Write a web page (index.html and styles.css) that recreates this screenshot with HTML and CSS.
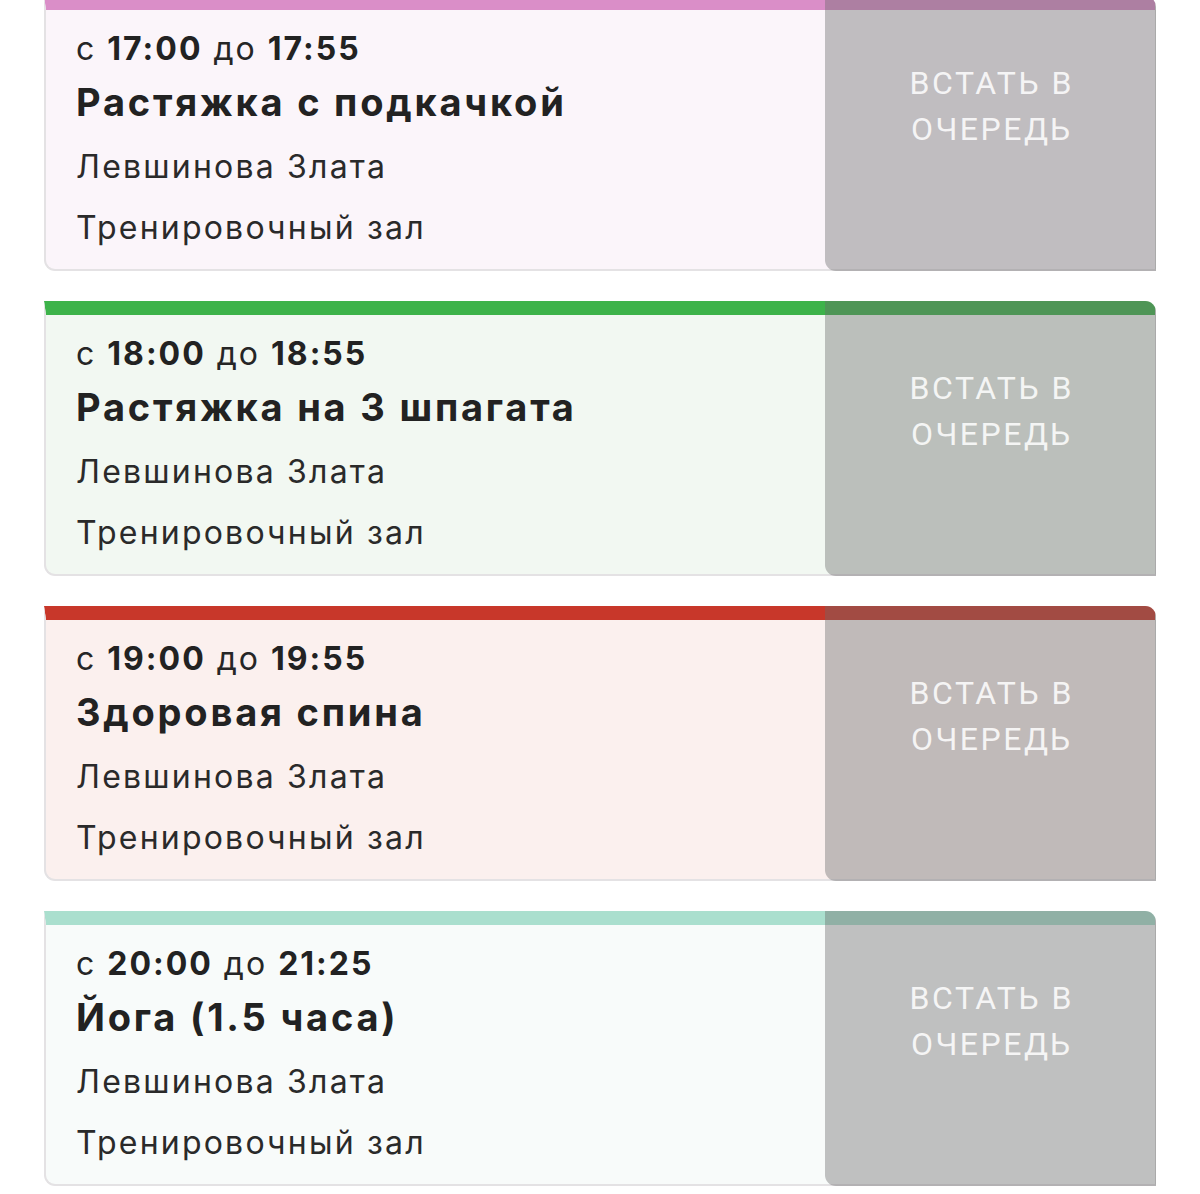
FILE: index.html
```html
<!DOCTYPE html>
<html lang="ru">
<head>
<meta charset="utf-8">
<title>Расписание</title>
<link rel="stylesheet" href="styles.css">
</head>
<body>
<div class="list">
  <div class="card pink">
    <div class="info">
      <div class="time">с <b>17:00</b> до <b>17:55</b></div>
      <div class="title">Растяжка с подкачкой</div>
      <div class="line">Левшинова Злата</div>
      <div class="line">Тренировочный зал</div>
    </div>
    <div class="btn">ВСТАТЬ В ОЧЕРЕДЬ</div>
  </div>
  <div class="card green">
    <div class="info">
      <div class="time">с <b>18:00</b> до <b>18:55</b></div>
      <div class="title">Растяжка на 3 шпагата</div>
      <div class="line">Левшинова Злата</div>
      <div class="line">Тренировочный зал</div>
    </div>
    <div class="btn">ВСТАТЬ В ОЧЕРЕДЬ</div>
  </div>
  <div class="card red">
    <div class="info">
      <div class="time">с <b>19:00</b> до <b>19:55</b></div>
      <div class="title">Здоровая спина</div>
      <div class="line">Левшинова Злата</div>
      <div class="line">Тренировочный зал</div>
    </div>
    <div class="btn">ВСТАТЬ В ОЧЕРЕДЬ</div>
  </div>
  <div class="card teal">
    <div class="info">
      <div class="time">с <b>20:00</b> до <b>21:25</b></div>
      <div class="title">Йога (1.5 часа)</div>
      <div class="line">Левшинова Злата</div>
      <div class="line">Тренировочный зал</div>
    </div>
    <div class="btn">ВСТАТЬ В ОЧЕРЕДЬ</div>
  </div>
</div>
</body>
</html>
```
FILE: styles.css
```css
html, body {
  margin: 0;
  padding: 0;
  background: #ffffff;
}
body {
  font-family: Inter, "Noto Sans", sans-serif;
  color: #222222;
  overflow: hidden;
}
.list {
  display: flex;
  flex-direction: column;
  gap: 30px;
  padding-left: 44px;
  width: 1112px;
  margin-top: -4px;
}
.card {
  position: relative;
  display: flex;
  height: 259px;
  border-top: 14px solid #d98ec7;
  border-left: 2px solid #e4e2e4;
  border-bottom: 2px solid #e4e2e4;
  border-right: 1px solid #d6d6d6;
  border-radius: 0 11px 0 11px;
}
.pink { background: #fbf5fa; border-top-color: #da8ec8; }
.green { background: #f2f8f2; border-top-color: #3db34a; }
.red { background: #fbf0ee; border-top-color: #c8372a; }
.teal { background: #f8fbfa; border-top-color: #aadfce; }
.info {
  flex: 1;
  padding: 19px 0 0 30px;
}
.time {
  font-size: 32px;
  line-height: 40px;
  font-weight: 400;
  letter-spacing: 2px;
  color: #262626;
}
.time b {
  font-weight: 700;
  color: #222222;
}
.title {
  margin-top: 10px;
  font-size: 38px;
  line-height: 46px;
  font-weight: 700;
  letter-spacing: 2.8px;
}
.line {
  margin-top: 22px;
  font-size: 32px;
  line-height: 40px;
  color: #2a2a2a;
  letter-spacing: 2.2px;
}
.line + .line {
  margin-top: 21px;
}
.btn {
  position: absolute;
  top: -14px;
  right: -1px;
  bottom: -2px;
  width: 331px;
  box-sizing: border-box;
  padding: 64px 60px 0 62.5px;
  background: rgba(105, 105, 105, 0.4);
  border-radius: 0 11px 0 11px;
  font-family: Roboto, "Noto Sans", sans-serif;
  font-size: 32px;
  line-height: 46px;
  color: rgba(255, 255, 255, 0.85);
  text-align: center;
  letter-spacing: 2.5px;
}
```
